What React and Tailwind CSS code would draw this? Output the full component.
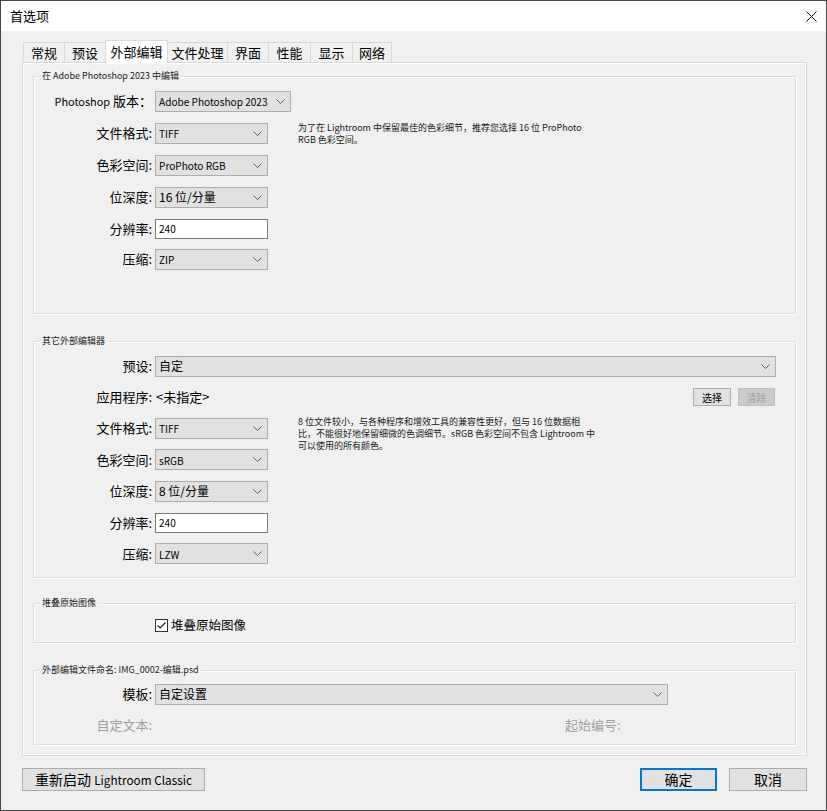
import React from "react";

// Latin glyphs of Noto Sans CJK run wide; the reference uses a smaller Latin face
const L = ({ children }) => <span className="text-[0.84em]">{children}</span>;

const Chevron = () => (
  <svg width="9" height="5" viewBox="0 0 9 5" className="shrink-0">
    <path d="M0.5 0.5L4.5 4.5L8.5 0.5" fill="none" stroke="#606060" strokeWidth="1" />
  </svg>
);

function Select({ value, className = "w-[113px]" }) {
  return (
    <div className={`${className} h-[21px] flex items-center justify-between border border-[#adadad] bg-[#e1e1e1] pl-[3px] pr-[5px] text-[12px] text-black`}>
      <span className="whitespace-nowrap">{value}</span>
      <Chevron />
    </div>
  );
}

function Field({ value }) {
  return (
    <div className="w-[113px] h-[20px] flex items-center border border-[#7a7a7a] bg-white pl-[3px] text-[12px] text-black">
      {value}
    </div>
  );
}

function Label({ children, muted }) {
  return (
    <div className={`text-right pr-[3px] text-[13px] whitespace-nowrap ${muted ? "text-[#a0a0a0]" : "text-black"}`}>
      {children}
    </div>
  );
}

function Group({ title, className, children }) {
  return (
    <fieldset className={`border border-[#dcdcdc] shadow-[inset_1px_1px_0_#fff,1px_1px_0_#fff] ${className}`}>
      <legend className="ml-[6px] px-[2px] text-[9px] leading-[12px] text-[#222] bg-[#f0f0f0] whitespace-nowrap">{title}</legend>
      {children}
    </fieldset>
  );
}

function Desc({ lines, className }) {
  return (
    <div className={`ml-[30px] text-[9px] leading-[12px] text-[#1a1a1a] whitespace-nowrap ${className}`}>
      {lines.map((l, i) => (
        <div key={i}>{l}</div>
      ))}
    </div>
  );
}

const tabs = [
  { name: "常规", w: "w-[41px]" },
  { name: "预设", w: "w-[41px]" },
  { name: "外部编辑", w: "w-[63px]", active: true },
  { name: "文件处理", w: "w-[59px]" },
  { name: "界面", w: "w-[41px]" },
  { name: "性能", w: "w-[42px]" },
  { name: "显示", w: "w-[42px]" },
  { name: "网络", w: "w-[40px]" },
];

export default function App() {
  return (
    <div className="w-[827px] h-[811px] flex flex-col border border-[#474747] bg-[#f0f0f0] font-['Noto_Sans_CJK_SC',sans-serif] text-black overflow-hidden">
      {/* title bar */}
      <div className="h-[30px] shrink-0 bg-white flex items-center justify-between pl-[9px] pr-[9px]">
        <span className="text-[13px]">首选项</span>
        <svg width="11" height="11" viewBox="0 0 11 11">
          <path d="M0.5 0.5L10.5 10.5M10.5 0.5L0.5 10.5" stroke="#111" strokeWidth="1" />
        </svg>
      </div>

      {/* tabs */}
      <div className="flex items-end ml-[22px] mt-[9px] h-[22px] relative z-10">
        {tabs.map((t, i) => (
          <div
            key={t.name}
            className={`${t.w} flex items-center justify-center text-[13px] border-t border-[#d9d9d9] ${
              t.active
                ? "h-[23px] -mb-px bg-white border-x"
                : `h-[20px] ${tabs[i - 1]?.active ? "" : "border-l"} ${i === tabs.length - 1 ? "border-r" : ""}`
            }`}
          >
            {t.name}
          </div>
        ))}
      </div>

      {/* tab panel */}
      <div className="ml-[21px] w-[785px] border border-[#d9d9d9] shadow-[inset_1px_1px_0_#fff,inset_-1px_-1px_0_#fff] pt-[7px] pb-[10px] px-[10px]">
        <Group title="在 Adobe Photoshop 2023 中编辑" className="h-[244px]">
          <div className="grid grid-cols-[121px_113px_1fr] grid-rows-[32px_32px_32px_32px_31px_30px] items-center pt-[3px]">
            <Label><L>Photoshop</L> 版本：</Label>
            <Select value={<L>Adobe Photoshop 2023</L>} className="w-[136px]" />
            <div />
            <Label>文件格式:</Label>
            <Select value={<L>TIFF</L>} />
            <Desc
              className="row-span-4 self-start mt-[5px]"
              lines={["为了在 Lightroom 中保留最佳的色彩细节，推荐您选择 16 位 ProPhoto", "RGB 色彩空间。"]}
            />
            <Label>色彩空间:</Label>
            <Select value={<L>ProPhoto RGB</L>} />
            <Label>位深度:</Label>
            <Select value="16 位/分量" />
            <Label>分辨率:</Label>
            <Field value={<L>240</L>} />
            <Label>压缩:</Label>
            <Select value={<L>ZIP</L>} />
          </div>
        </Group>

        <Group title="其它外部编辑器" className="h-[243px] mt-[21px]">
          <div className="grid grid-cols-[121px_113px_1fr] grid-rows-[32px_30px_32px_31px_32px_31px_31px] items-center pt-[3px]">
            <Label>预设:</Label>
            <div className="col-span-2">
              <Select value="自定" className="w-[621px]" />
            </div>
            <Label>应用程序:</Label>
            <div className="text-[13px] pl-px">{"<未指定>"}</div>
            <div className="flex justify-end gap-[7px] pr-[20px]">
              <div className="w-[38px] h-[18px] flex items-center justify-center border border-[#adadad] bg-[#e1e1e1] text-[10px]">选择</div>
              <div className="w-[37px] h-[18px] flex items-center justify-center border border-[#bfbfbf] bg-[#cccccc] text-[10px] text-[#a0a0a0]">清除</div>
            </div>
            <Label>文件格式:</Label>
            <Select value={<L>TIFF</L>} />
            <Desc
              className="row-span-4 self-start mt-[4px]"
              lines={[
                "8 位文件较小，与各种程序和增效工具的兼容性更好，但与 16 位数据相",
                "比，不能很好地保留细微的色调细节。sRGB 色彩空间不包含 Lightroom 中",
                "可以使用的所有颜色。",
              ]}
            />
            <Label>色彩空间:</Label>
            <Select value={<L>sRGB</L>} />
            <Label>位深度:</Label>
            <Select value="8 位/分量" />
            <Label>分辨率:</Label>
            <Field value={<L>240</L>} />
            <Label>压缩:</Label>
            <Select value={<L>LZW</L>} />
          </div>
        </Group>

        <Group title="堆叠原始图像" className="h-[46px] mt-[19px]">
          <div className="grid grid-cols-[121px_1fr] grid-rows-[32px] items-center">
            <div />
            <div className="flex items-center gap-[3px] text-[12.5px]">
              <div className="w-[13px] h-[13px] border border-[#333] bg-white flex items-center justify-center">
                <svg width="9" height="7" viewBox="0 0 9 7">
                  <path d="M0.5 3.5L3.2 6L8.5 0.5" fill="none" stroke="#222" strokeWidth="1.1" />
                </svg>
              </div>
              <span>堆叠原始图像</span>
            </div>
          </div>
        </Group>

        <Group title="外部编辑文件命名: IMG_0002-编辑.psd" className="h-[81px] mt-[21px]">
          <div className="grid grid-cols-[121px_113px_1fr] grid-rows-[32px_30px] items-center pt-[2px]">
            <Label>模板:</Label>
            <div className="col-span-2">
              <Select value="自定设置" className="w-[513px]" />
            </div>
            <Label muted>自定文本:</Label>
            <div />
            <div className="ml-[297px] text-[13px] text-[#a0a0a0] whitespace-nowrap">起始编号:</div>
          </div>
        </Group>
      </div>

      {/* footer buttons */}
      <div className="flex items-center justify-between mt-[12px] ml-[21px] w-[785px]">
        <div className="w-[183px] h-[23px] flex items-center justify-center border border-[#adadad] bg-[#e1e1e1] text-[14px] whitespace-nowrap">
          重新启动&nbsp;<L>Lightroom Classic</L>
        </div>
        <div className="flex gap-[12px]">
          <div className="w-[77px] h-[23px] flex items-center justify-center border border-[#0078d7] shadow-[inset_0_0_0_1px_#0078d7] bg-[#e1e1e1] text-[14px]">确定</div>
          <div className="w-[78px] h-[23px] flex items-center justify-center border border-[#adadad] bg-[#e1e1e1] text-[14px]">取消</div>
        </div>
      </div>
    </div>
  );
}
